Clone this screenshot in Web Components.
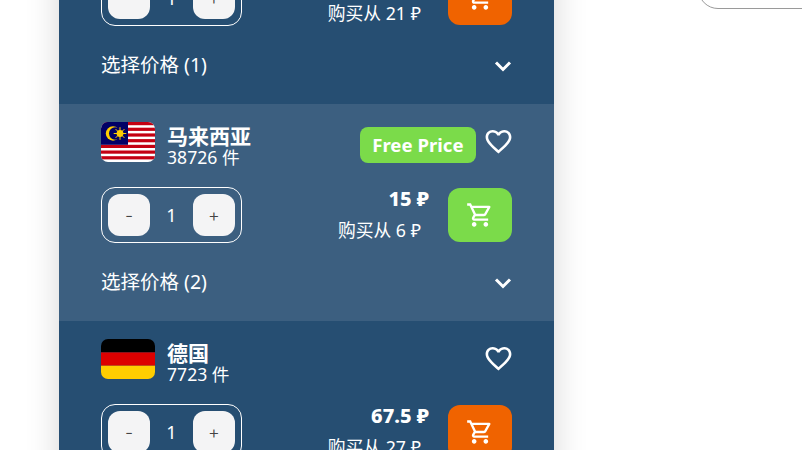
<!DOCTYPE html>
<html lang="zh">
<head>
<meta charset="utf-8">
<title>Offers</title>
<style>
  html, body { margin: 0; height: 450px; overflow: hidden; background: #fff; }
  body { font-family: "Noto Sans", "Noto Sans CJK SC", sans-serif; }
</style>
</head>
<body>
<offer-page>
  <offer-row price="52.5" from="21" tint="dark" action="orange" choices="1" name="" count=""></offer-row>
  <offer-row price="15" from="6" tint="light" action="green" choices="2" name="马来西亚" count="38726" badge="Free Price">
    <svg slot="flag" viewBox="0 0 54 40" width="54" height="40">
      <rect width="54" height="40" fill="#fff"/>
      <g fill="#c40012">
        <rect y="0" width="54" height="3.2"/><rect y="5.7" width="54" height="3.2"/>
        <rect y="11.4" width="54" height="3.2"/><rect y="17.1" width="54" height="3.2"/>
        <rect y="22.8" width="54" height="3.2"/><rect y="28.5" width="54" height="3.2"/>
        <rect y="34.2" width="54" height="3.2"/>
      </g>
      <rect width="27" height="22.8" fill="#010066"/>
      <circle cx="12" cy="11.5" r="7.2" fill="#fc0"/>
      <circle cx="14.2" cy="11.5" r="6.2" fill="#010066"/>
      <g stroke="#fc0" stroke-width="1">
        <path d="M19 5.2V17.8M12.7 11.5H25.3M14.6 7.1L23.4 15.9M23.4 7.1L14.6 15.9"/>
      </g>
      <circle cx="19" cy="11.5" r="3.4" fill="#fc0"/>
    </svg>
  </offer-row>
  <offer-row price="67.5" from="27" tint="dark" action="orange" choices="" name="德国" count="7723">
    <svg slot="flag" viewBox="0 0 54 40" width="54" height="40">
      <rect width="54" height="13.4" fill="#000"/>
      <rect y="13.4" width="54" height="13.3" fill="#d00"/>
      <rect y="26.7" width="54" height="13.3" fill="#ffce00"/>
    </svg>
  </offer-row>
</offer-page>

<script>
// Shared font stack for all shadow roots
const FONT = '"Noto Sans", "Noto Sans CJK SC", sans-serif';

class OfferPage extends HTMLElement {
  constructor() {
    super();
    this.attachShadow({ mode: 'open' });
  }

  connectedCallback() {
    this.shadowRoot.innerHTML = `
      <style>
        :host {
          display: flex;
          align-items: flex-start;
          width: 802px;
          margin-top: -113px;
          padding-left: 59px;
          box-sizing: border-box;
          overflow: visible;
          font-family: ${FONT};
        }
        .list {
          flex: 0 0 495px;
          box-shadow: 0 0 32px rgba(0, 0, 0, 0.16);
        }
        .side {
          flex: 0 0 auto;
          width: 220px;
          height: 122px;
          margin-left: 144px;
          box-sizing: border-box;
          border: 1px solid #9a9a9a;
          border-radius: 20px;
        }
      </style>
      <div class="list"><slot></slot></div>
      <div class="side"></div>
    `;
  }
}

class QtyStepper extends HTMLElement {
  constructor() {
    super();
    this.attachShadow({ mode: 'open' });
  }

  connectedCallback() {
    this.shadowRoot.innerHTML = `
      <style>
        :host {
          display: flex;
          align-items: center;
          justify-content: space-between;
          box-sizing: border-box;
          width: 141px;
          height: 56px;
          margin-top: -1px;
          padding: 0 6px;
          border: 1px solid #fff;
          border-radius: 14px;
          color: #fff;
          font-size: 18px;
        }
        button {
          width: 42px;
          height: 42px;
          padding: 0;
          border: 0;
          border-radius: 12px;
          background: #f4f4f5;
          color: #444;
          font: 300 18px Inter, sans-serif;
        }
      </style>
      <button>-</button>
      <span>1</span>
      <button>+</button>
    `;
  }
}

class OfferRow extends HTMLElement {
  constructor() {
    super();
    this.attachShadow({ mode: 'open' });
  }

  connectedCallback() {
    this.render();
  }

  render() {
    const name = this.getAttribute('name') || '';
    const count = this.getAttribute('count');
    const badge = this.getAttribute('badge');
    const choices = this.getAttribute('choices');
    const price = this.getAttribute('price');
    const from = this.getAttribute('from');

    this.shadowRoot.innerHTML = `
      <style>
        :host {
          display: block;
          box-sizing: border-box;
          height: 217px;
          padding: 18px 42px 0;
          background: #264e72;
          color: #fff;
        }
        :host([tint="light"]) { background: #3c5f80; }
        .head {
          display: flex;
          align-items: center;
          height: 40px;
          margin-bottom: 26px;
        }
        .flag {
          flex: 0 0 54px;
          height: 40px;
          border-radius: 7px;
          overflow: hidden;
          margin-right: 12px;
        }
        ::slotted(svg) { display: block; }
        .title { flex: 1; min-width: 0; margin-top: 8px; }
        .name { font-size: 21px; font-weight: 700; line-height: 22px; }
        .count { font-size: 17.6px; line-height: 20px; }
        .badge {
          height: 36px;
          line-height: 36px;
          padding: 0 12.5px;
          margin: 6px 7px 0 0;
          border-radius: 8px;
          background: #7bdb4a;
          font-size: 18.6px;
          font-weight: 700;
        }
        .heart { display: block; margin: -2px -2px 0 0; }
        .buy { display: flex; align-items: flex-start; }
        .prices {
          flex: 1;
          text-align: right;
          padding-right: 19px;
        }
        .price { font-size: 20px; font-weight: 800; line-height: 24px; margin-top: -1px; }
        .from { font-size: 17.8px; line-height: 24px; margin-top: 7px; padding-right: 8px; }
        .cart {
          flex: 0 0 64px;
          display: flex;
          align-items: center;
          justify-content: center;
          height: 54px;
          border-radius: 12px;
          background: #f06300;
        }
        :host([action="green"]) .cart { background: #7bdb4a; }
        .foot {
          display: flex;
          align-items: center;
          justify-content: space-between;
          height: 78px;
          font-size: 19.5px;
        }
        .foot span { margin-top: -4px; }
        .foot svg { margin-top: 2px; }
      </style>
      <div class="head">
        <div class="flag"><slot name="flag"></slot></div>
        <div class="title">
          ${name ? `<div class="name">${name}</div>` : ''}
          ${count ? `<div class="count">${count} 件</div>` : ''}
        </div>
        ${badge ? `<div class="badge">${badge}</div>` : ''}
        <svg class="heart" viewBox="0 0 24 24" width="31" height="31" fill="#fff"><path d="M16.5 3c-1.74 0-3.41.81-4.5 2.09C10.91 3.81 9.24 3 7.5 3 4.42 3 2 5.42 2 8.5c0 3.78 3.4 6.86 8.55 11.54L12 21.35l1.45-1.32C18.6 15.36 22 12.28 22 8.5 22 5.42 19.58 3 16.5 3zm-4.4 15.55l-.1.1-.1-.1C7.14 14.24 4 11.39 4 8.5 4 6.5 5.5 5 7.5 5c1.54 0 3.04.99 3.57 2.36h1.87C13.46 5.99 14.96 5 16.5 5c2 0 3.5 1.5 3.5 3.5 0 2.89-3.14 5.74-7.9 10.05z"/></svg>
      </div>
      <div class="buy">
        <qty-stepper></qty-stepper>
        <div class="prices">
          <div class="price">${price} ₽</div>
          <div class="from">购买从 ${from} ₽</div>
        </div>
        <div class="cart">
          <svg viewBox="0 0 24 24" width="28" height="28" fill="#fff"><path d="M15.55 13c.75 0 1.41-.41 1.75-1.03l3.58-6.49c.37-.66-.11-1.48-.87-1.48H5.21l-.94-2H1v2h2l3.6 7.59-1.35 2.44C4.52 15.37 5.48 17 7 17h12v-2H7l1.1-2h7.45zM6.16 6h12.15l-2.76 5H8.53L6.16 6zM7 18c-1.1 0-1.99.9-1.99 2S5.9 22 7 22s2-.9 2-2-.9-2-2-2zm10 0c-1.1 0-1.99.9-1.99 2s.89 2 1.99 2 2-.9 2-2-.9-2-2-2z"/></svg>
        </div>
      </div>
      <div class="foot">
        ${choices ? `<span>选择价格 (${choices})</span>
        <svg viewBox="0 0 18 12" width="18" height="12" fill="none" stroke="#fff" stroke-width="3"><path d="M2 2.5l7 7 7-7"/></svg>` : ''}
      </div>
    `;
  }
}

customElements.define('offer-page', OfferPage);
customElements.define('qty-stepper', QtyStepper);
customElements.define('offer-row', OfferRow);
</script>
</body>
</html>
